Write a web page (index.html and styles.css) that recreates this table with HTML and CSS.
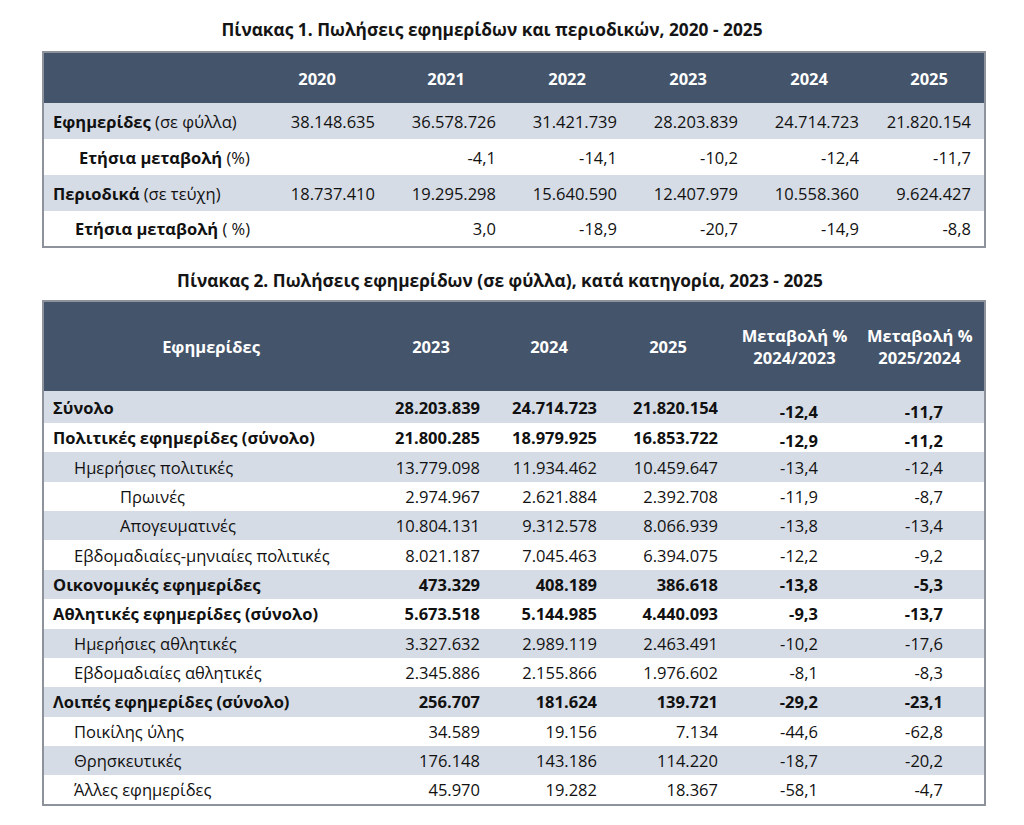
FILE: index.html
```html
<!DOCTYPE html>
<html lang="el">
<head>
<meta charset="utf-8">
<title>Πωλήσεις εφημερίδων και περιοδικών</title>
<link rel="stylesheet" href="styles.css">
</head>
<body>
<main class="page">
  <h2 class="caption cap1">Πίνακας 1. Πωλήσεις εφημερίδων και περιοδικών, 2020 - 2025</h2>
  <table class="tbl t1">
    <colgroup>
      <col class="c1-label"><col class="c1-year"><col class="c1-year"><col class="c1-year"><col class="c1-year"><col class="c1-year"><col class="c1-last">
    </colgroup>
    <thead>
      <tr>
        <th></th>
        <th class="y first">2020</th>
        <th class="y">2021</th>
        <th class="y">2022</th>
        <th class="y">2023</th>
        <th class="y">2024</th>
        <th class="y">2025</th>
      </tr>
    </thead>
    <tbody>
      <tr class="shade">
        <td class="lab l0"><b>Εφημερίδες</b> (σε φύλλα)</td>
        <td class="n">38.148.635</td><td class="n">36.578.726</td><td class="n">31.421.739</td><td class="n">28.203.839</td><td class="n">24.714.723</td><td class="n last">21.820.154</td>
      </tr>
      <tr>
        <td class="lab l1a"><b>Ετήσια μεταβολή</b> (%)</td>
        <td class="n"></td><td class="n">-4,1</td><td class="n">-14,1</td><td class="n">-10,2</td><td class="n">-12,4</td><td class="n last">-11,7</td>
      </tr>
      <tr class="shade">
        <td class="lab l0"><b>Περιοδικά</b> (σε τεύχη)</td>
        <td class="n">18.737.410</td><td class="n">19.295.298</td><td class="n">15.640.590</td><td class="n">12.407.979</td><td class="n">10.558.360</td><td class="n last">9.624.427</td>
      </tr>
      <tr>
        <td class="lab l1b"><b>Ετήσια μεταβολή</b> ( %)</td>
        <td class="n"></td><td class="n">3,0</td><td class="n">-18,9</td><td class="n">-20,7</td><td class="n">-14,9</td><td class="n last">-8,8</td>
      </tr>
    </tbody>
  </table>

  <h2 class="caption cap2">Πίνακας 2. Πωλήσεις εφημερίδων (σε φύλλα), κατά κατηγορία, 2023 - 2025</h2>
  <table class="tbl t2">
    <colgroup>
      <col class="c2-label"><col class="c2-a"><col class="c2-b"><col class="c2-c"><col class="c2-d"><col class="c2-e">
    </colgroup>
    <thead>
      <tr>
        <th class="h">Εφημερίδες</th>
        <th class="h">2023</th>
        <th class="h">2024</th>
        <th class="h">2025</th>
        <th class="h">Μεταβολή %<br>2024/2023</th>
        <th class="h he">Μεταβολή %<br>2025/2024</th>
      </tr>
    </thead>
    <tbody>
      <tr class="shade bold top">
        <td class="lab l0">Σύνολο</td>
        <td class="n a">28.203.839</td><td class="n b">24.714.723</td><td class="n c">21.820.154</td><td class="n d lo">-12,4</td><td class="n e lo">-11,7</td>
      </tr>
      <tr class="bold">
        <td class="lab l0">Πολιτικές εφημερίδες (σύνολο)</td>
        <td class="n a">21.800.285</td><td class="n b">18.979.925</td><td class="n c">16.853.722</td><td class="n d lo">-12,9</td><td class="n e lo">-11,2</td>
      </tr>
      <tr class="shade">
        <td class="lab l1">Ημερήσιες πολιτικές</td>
        <td class="n a">13.779.098</td><td class="n b">11.934.462</td><td class="n c">10.459.647</td><td class="n d">-13,4</td><td class="n e">-12,4</td>
      </tr>
      <tr>
        <td class="lab l2">Πρωινές</td>
        <td class="n a">2.974.967</td><td class="n b">2.621.884</td><td class="n c">2.392.708</td><td class="n d">-11,9</td><td class="n e">-8,7</td>
      </tr>
      <tr class="shade">
        <td class="lab l2">Απογευματινές</td>
        <td class="n a">10.804.131</td><td class="n b">9.312.578</td><td class="n c">8.066.939</td><td class="n d">-13,8</td><td class="n e">-13,4</td>
      </tr>
      <tr>
        <td class="lab l1">Εβδομαδιαίες-μηνιαίες πολιτικές</td>
        <td class="n a">8.021.187</td><td class="n b">7.045.463</td><td class="n c">6.394.075</td><td class="n d">-12,2</td><td class="n e">-9,2</td>
      </tr>
      <tr class="shade bold">
        <td class="lab l0">Οικονομικές εφημερίδες</td>
        <td class="n a">473.329</td><td class="n b">408.189</td><td class="n c">386.618</td><td class="n d">-13,8</td><td class="n e">-5,3</td>
      </tr>
      <tr class="bold">
        <td class="lab l0">Αθλητικές εφημερίδες (σύνολο)</td>
        <td class="n a">5.673.518</td><td class="n b">5.144.985</td><td class="n c">4.440.093</td><td class="n d">-9,3</td><td class="n e">-13,7</td>
      </tr>
      <tr class="shade">
        <td class="lab l1">Ημερήσιες αθλητικές</td>
        <td class="n a">3.327.632</td><td class="n b">2.989.119</td><td class="n c">2.463.491</td><td class="n d">-10,2</td><td class="n e">-17,6</td>
      </tr>
      <tr>
        <td class="lab l1">Εβδομαδιαίες αθλητικές</td>
        <td class="n a">2.345.886</td><td class="n b">2.155.866</td><td class="n c">1.976.602</td><td class="n d">-8,1</td><td class="n e">-8,3</td>
      </tr>
      <tr class="shade bold">
        <td class="lab l0">Λοιπές εφημερίδες (σύνολο)</td>
        <td class="n a">256.707</td><td class="n b">181.624</td><td class="n c">139.721</td><td class="n d">-29,2</td><td class="n e">-23,1</td>
      </tr>
      <tr>
        <td class="lab l1">Ποικίλης ύλης</td>
        <td class="n a">34.589</td><td class="n b">19.156</td><td class="n c">7.134</td><td class="n d">-44,6</td><td class="n e">-62,8</td>
      </tr>
      <tr class="shade">
        <td class="lab l1">Θρησκευτικές</td>
        <td class="n a">176.148</td><td class="n b">143.186</td><td class="n c">114.220</td><td class="n d">-18,7</td><td class="n e">-20,2</td>
      </tr>
      <tr>
        <td class="lab l1">Άλλες εφημερίδες</td>
        <td class="n a">45.970</td><td class="n b">19.282</td><td class="n c">18.367</td><td class="n d">-58,1</td><td class="n e">-4,7</td>
      </tr>
    </tbody>
  </table>
</main>
</body>
</html>
```
FILE: styles.css
```css
html, body {
  margin: 0;
  padding: 0;
  background: #ffffff;
}

body {
  font-family: "Open Sans", "Noto Sans", "DejaVu Sans", sans-serif;
  color: #111111;
}

.page {
  width: 942px;
  padding: 19px 0 0 42px;
}

.caption {
  margin: 0;
  font-size: 17.3px;
  line-height: 22px;
  font-weight: 700;
  text-align: center;
  color: #141414;
}

.cap1 {
  margin-bottom: 10px;
  padding-right: 42px;
}

.cap2 {
  margin-top: 22px;
  margin-bottom: 8px;
  padding-right: 26px;
}

.tbl {
  width: 942px;
  border-collapse: collapse;
  table-layout: fixed;
  border: 2px solid #8d929b;
  font-size: 16.5px;
}

.tbl th,
.tbl td {
  padding: 0;
  white-space: nowrap;
}

.tbl thead tr {
  background: #44546a;
  color: #ffffff;
}

.tbl th {
  font-weight: 700;
}

.shade {
  background: #d6dce5;
}

.tbl .lab {
  text-align: left;
}

.lab b {
  font-weight: 700;
}

/* ---------- table 1 ---------- */
.c1-label { width: 216px; }
.c1-year { width: 121px; }
.c1-last { width: 121px; }

.t1 thead tr {
  height: 51px;
}

.t1 tbody tr {
  height: 36px;
}

.t1 .y {
  text-align: right;
  padding-right: 36px;
}

.t1 .y.first {
  padding-right: 44px;
}

.t1 .n {
  text-align: right;
  padding-right: 5px;
}

.t1 .n.last {
  padding-right: 13px;
}

.t1 .l0 { padding-left: 9px; }
.t1 .l1a { padding-left: 35px; }
.t1 .l1b { padding-left: 31px; }

/* ---------- table 2 ---------- */
.c2-label { width: 335px; }
.c2-a { width: 106px; }
.c2-b { width: 130px; }
.c2-c { width: 108px; }
.c2-d { width: 145px; }
.c2-e { width: 118px; }

.t2 thead tr {
  height: 90px;
}

.t2 .h {
  text-align: center;
  line-height: 22px;
}

.t2 .h.he {
  padding-right: 12px;
}

.t2 tbody tr {
  height: 29.36px;
}

.t2 .l0 { padding-left: 9px; }
.t2 .l1 { padding-left: 30px; }
.t2 .l2 { padding-left: 76px; }

.t2 .n { text-align: right; }
.t2 .n.a { padding-right: 4px; }
.t2 .n.b { padding-right: 17px; }
.t2 .n.c { padding-right: 4px; }
.t2 .n.d { padding-right: 49px; }
.t2 .n.e { padding-right: 41px; }

.t2 .n.lo {
  padding-top: 6px;
}

.t2 .top .n.lo {
  padding-top: 9px;
}

.bold td {
  font-weight: 700;
}
```
